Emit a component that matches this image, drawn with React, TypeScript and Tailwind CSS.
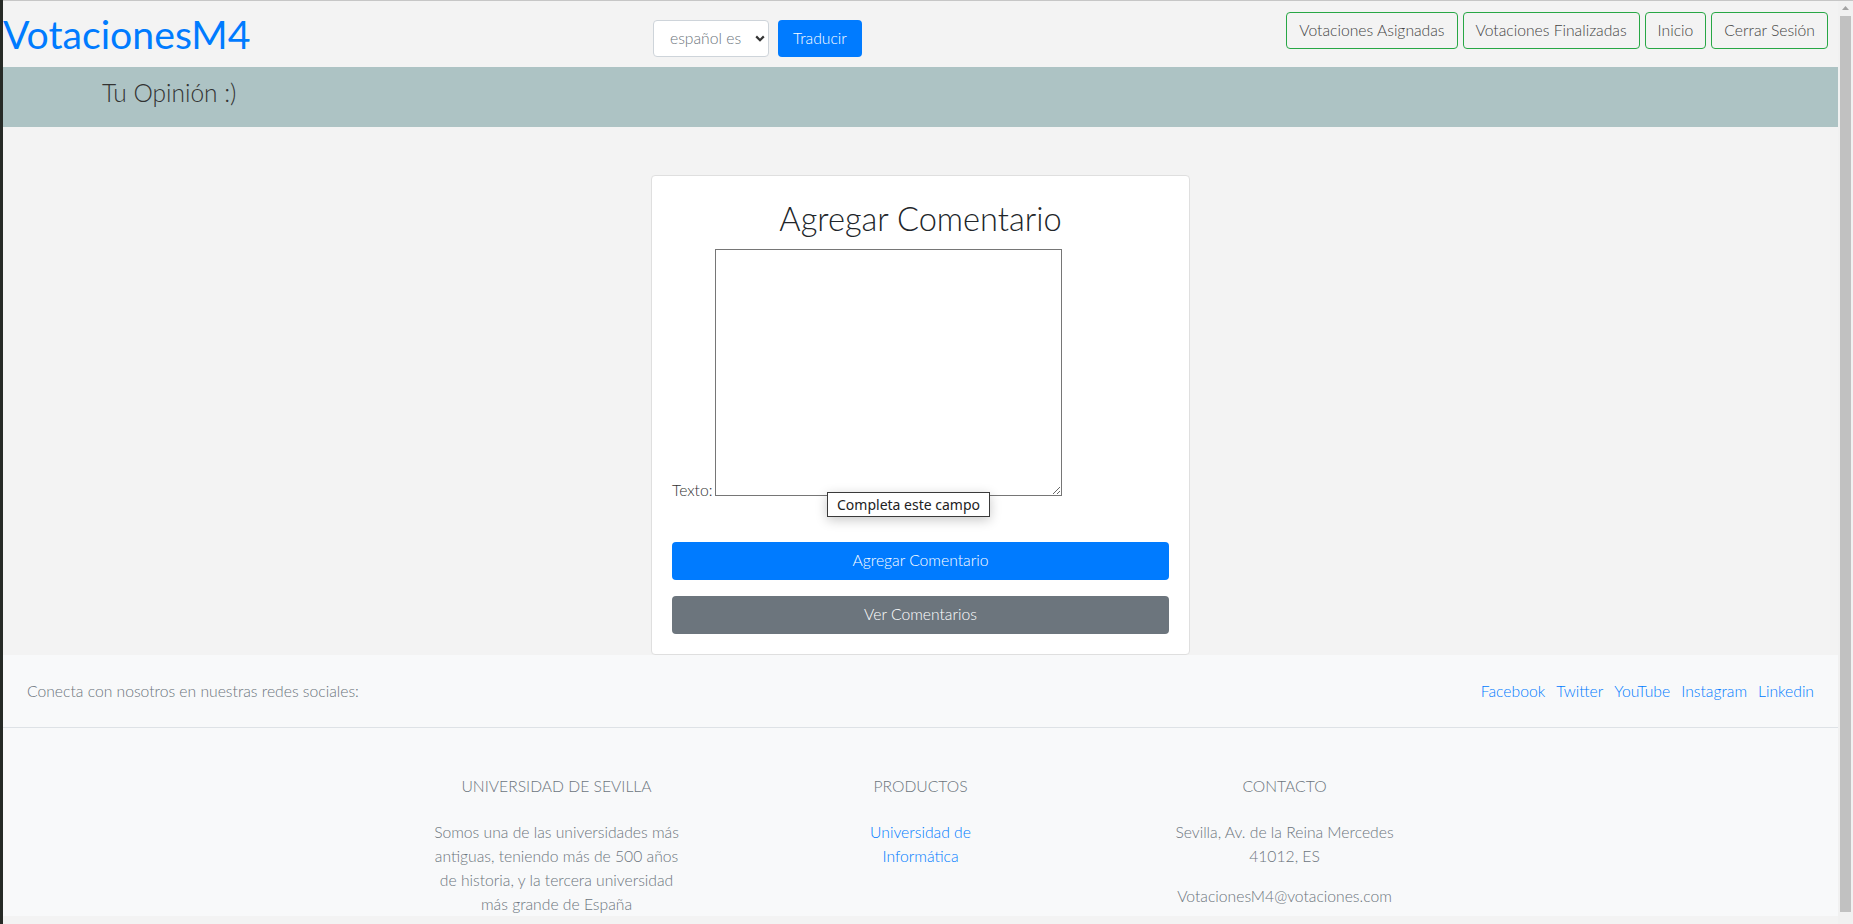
import React from 'react';

// nav + footer data
const navLinks = ['Votaciones Asignadas', 'Votaciones Finalizadas', 'Inicio', 'Cerrar Sesión'];
const socials = ['Facebook', 'Twitter', 'YouTube', 'Instagram', 'Linkedin'];

export default function App() {
  return (
    <div className="flex h-[924px] w-[1853px] overflow-hidden bg-[#f3f3f3] font-['Lato','Liberation_Sans',sans-serif] font-light text-[#212529]">
      {/* desktop edge peeking on the left */}
      <div className="w-[3px] shrink-0 bg-[#262a26]" />

      <div className="flex min-w-0 flex-1 flex-col">
        <div className="h-px shrink-0 bg-[#c6c6c6]" />

        <div className="flex min-h-0 flex-1">
          <div className="flex min-w-0 flex-1 flex-col overflow-hidden">
            {/* Navbar */}
            <nav className="flex h-[66px] shrink-0 items-start bg-[#f3f3f3]">
              <div className="w-[650px] shrink-0 pt-[9px]">
                <a className="text-[39.2px] leading-[48px] font-normal text-[#007bff]">VotacionesM4</a>
              </div>

              <div className="mt-[19px] flex gap-[9px]">
                <div className="flex h-[37px] w-[116px] items-center justify-between rounded-[4px] border border-[#ced4da] bg-white pl-[16px] pr-[3px] text-[15.7px] text-[#6c757d]">
                  <span>español es</span>
                  <svg width="10" height="7" viewBox="0 0 10 7">
                    <path d="M1.2 1.4 5 5.2 8.8 1.4" stroke="#333" strokeWidth="2.2" fill="none" />
                  </svg>
                </div>
                <button className="h-[37px] rounded-[4px] bg-[#007bff] px-[15px] text-[15.7px] font-light text-white">
                  Traducir
                </button>
              </div>

              <div className="ml-auto mr-[10px] mt-[11px] flex gap-[5px]">
                {navLinks.map((link) => (
                  <button
                    key={link}
                    className="h-[37px] rounded-[4px] border border-[#28a745] px-3 text-[15.7px] font-light text-[#444]"
                  >
                    {link}
                  </button>
                ))}
              </div>
            </nav>

            {/* Page title banner */}
            <div className="h-[60px] shrink-0 bg-[#adc3c4] pl-[99px] pt-[11px]">
              <h4 className="text-[24.5px] leading-[30px] font-light text-[#333]">Tu Opinión :)</h4>
            </div>

            {/* Comment form */}
            <main className="flex shrink-0 justify-center pt-[48px]">
              <div className="relative w-[539px] rounded-[4px] border border-[#dfdfdf] bg-white px-[20px] pt-[24px] pb-[20px]">
                <h2 className="mb-[11px] text-center text-[32.6px] leading-[38px] font-light text-[#212529]">
                  Agregar Comentario
                </h2>
                <div className="text-[15.7px] leading-6">
                  <label className="mr-[3px] text-[#333]">Texto:</label>
                  <textarea className="h-[247px] w-[347px] border border-[#767676] bg-white align-baseline" />
                </div>

                {/* browser validation bubble */}
                <div className="absolute left-[175px] top-[316px] border border-[#3a3a3a] bg-white px-[9px] font-['Noto_Sans','Open_Sans',sans-serif] text-[14px] leading-[23px] font-normal text-[#222] shadow-[0_3px_12px_rgba(0,0,0,0.22)]">
                  Completa este campo
                </div>

                <button className="mt-[40px] block h-[38px] w-full rounded-[4px] bg-[#007bff] text-[15.7px] font-light text-white">
                  Agregar Comentario
                </button>
                <button className="mt-4 block h-[38px] w-full rounded-[4px] bg-[#6c757d] text-[15.7px] font-light text-white">
                  Ver Comentarios
                </button>
              </div>
            </main>

            {/* Footer */}
            <footer className="shrink-0 bg-[#f8f9fa] text-[15.7px] text-[#6c757d]">
              <div className="flex items-center justify-between border-b border-[#dee2e6] px-6 py-6 leading-6">
                <span>Conecta con nosotros en nuestras redes sociales:</span>
                <div className="flex gap-[11px] text-[#007bff]">
                  {socials.map((s) => (
                    <a key={s}>{s}</a>
                  ))}
                </div>
              </div>

              <div className="grid grid-cols-[364px_364px_364px] justify-center pt-[49px] text-center">
                <div className="mx-auto w-[250px]">
                  <h6 className="mb-6 leading-[19px] uppercase">Universidad de Sevilla</h6>
                  <p className="leading-6">
                    Somos una de las universidades más antiguas, teniendo más de 500 años de historia, y la tercera
                    universidad más grande de España
                  </p>
                </div>
                <div className="mx-auto w-[160px]">
                  <h6 className="mb-6 leading-[19px] uppercase">Productos</h6>
                  <p className="leading-6">
                    <a className="text-[#007bff]">Universidad de Informática</a>
                  </p>
                </div>
                <div className="mx-auto w-[240px]">
                  <h6 className="mb-6 leading-[19px] uppercase">Contacto</h6>
                  <p className="mb-4 leading-6">Sevilla, Av. de la Reina Mercedes 41012, ES</p>
                  <p className="leading-6">VotacionesM4@votaciones.com</p>
                </div>
              </div>
            </footer>
          </div>

          {/* scrollbar */}
          <div className="flex w-[15px] shrink-0 flex-col items-center bg-[#f1f1f1]">
            <svg width="7" height="4" viewBox="0 0 7 4" className="mt-[5px]">
              <path d="M0 4 3.5 0 7 4z" fill="#a3a3a3" />
            </svg>
            <div className="mt-[6px] h-[896px] w-[11px] bg-[#c1c1c1]" />
          </div>
        </div>
      </div>
    </div>
  );
}
